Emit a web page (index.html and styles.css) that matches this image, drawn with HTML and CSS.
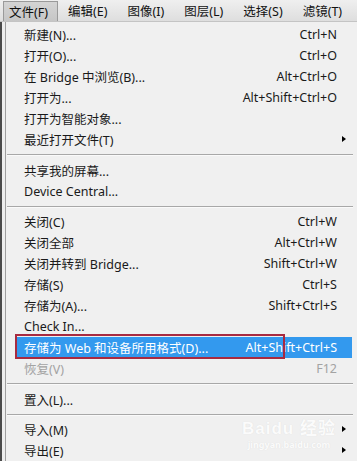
FILE: index.html
```html
<!DOCTYPE html>
<html lang="zh">
<head>
<meta charset="utf-8">
<link rel="stylesheet" href="styles.css">
</head>
<body>
<div class="menubar">
  <div class="top active">文件(F)</div>
  <div class="top">编辑(E)</div>
  <div class="top">图像(I)</div>
  <div class="top">图层(L)</div>
  <div class="top">选择(S)</div>
  <div class="top">滤镜(T)</div>
</div>
<div class="body">
  <div class="strip"></div>
  <div class="menu">
    <div class="item"><span>新建(N)...</span><span class="key">Ctrl+N</span></div>
    <div class="item"><span>打开(O)...</span><span class="key">Ctrl+O</span></div>
    <div class="item"><span>在 Bridge 中浏览(B)...</span><span class="key">Alt+Ctrl+O</span></div>
    <div class="item"><span>打开为...</span><span class="key">Alt+Shift+Ctrl+O</span></div>
    <div class="item"><span>打开为智能对象...</span></div>
    <div class="item"><span>最近打开文件(T)</span><span class="arrow"></span></div>
    <div class="sep"></div>
    <div class="item"><span>共享我的屏幕...</span></div>
    <div class="item"><span>Device Central...</span></div>
    <div class="sep"></div>
    <div class="item"><span>关闭(C)</span><span class="key">Ctrl+W</span></div>
    <div class="item"><span>关闭全部</span><span class="key">Alt+Ctrl+W</span></div>
    <div class="item"><span>关闭并转到 Bridge...</span><span class="key">Shift+Ctrl+W</span></div>
    <div class="item"><span>存储(S)</span><span class="key">Ctrl+S</span></div>
    <div class="item"><span>存储为(A)...</span><span class="key">Shift+Ctrl+S</span></div>
    <div class="item"><span>Check In...</span></div>
    <div class="item selected"><span>存储为 Web 和设备所用格式(D)...</span><span class="key">Alt+Shift+Ctrl+S</span><div class="mark"></div></div>
    <div class="item disabled"><span>恢复(V)</span><span class="key">F12</span></div>
    <div class="sep"></div>
    <div class="item"><span>置入(L)...</span></div>
    <div class="sep"></div>
    <div class="item"><span>导入(M)</span><span class="arrow"></span></div>
    <div class="item"><span>导出(E)</span><span class="arrow"></span></div>
    <div class="watermark"><span class="wm1">Bai<span class="paw">du</span> 经验</span><span class="wm2">jingyan.baidu.com</span></div>
  </div>
</div>
</body>
</html>
```
FILE: styles.css
```css
html, body {
  margin: 0;
  padding: 0;
}
body {
  width: 357px;
  height: 461px;
  overflow: hidden;
  background: #f0f0f0;
  font-family: "Noto Sans", "Noto Sans CJK SC", sans-serif;
  font-size: 12.5px;
  color: #1a1a1a;
}
.menubar {
  height: 22px;
  display: flex;
  align-items: stretch;
  background: linear-gradient(#efefef, #dedede);
  border-bottom: 1px solid #c4c4c4;
  box-sizing: border-box;
  padding-left: 3px;
  overflow: hidden;
}
.top {
  display: flex;
  align-items: center;
  padding: 0 10px 0 8px;
  margin-right: 2px;
  font-size: 12.5px;
  color: #111;
  white-space: nowrap;
  flex-shrink: 0;
}
.top.active {
  background: linear-gradient(#d4d4d4, #c6c6c6);
  border: 1px solid #9a9a9a;
  border-bottom: none;
  margin-top: 1px;
  padding: 0 9px 0 5px;
}
.body {
  display: flex;
  height: 439px;
}
.strip {
  width: 6px;
  background: #ededed;
  border-left: 2px solid #4a4a4a;
  box-sizing: border-box;
  border-right: 1px solid #9e9e9e;
}
.menu {
  flex: 1;
  position: relative;
  padding-top: 2px;
}
.item {
  height: 21px;
  display: flex;
  align-items: center;
  justify-content: space-between;
  padding: 0 20px 0 18px;
  position: relative;
  white-space: nowrap;
}
.key {
  text-align: right;
}
.arrow {
  position: absolute;
  right: 11px;
  top: 7px;
  width: 0;
  height: 0;
  border-top: 3.5px solid transparent;
  border-bottom: 3.5px solid transparent;
  border-left: 4px solid #000;
}
.sep {
  height: 1px;
  background: #a8a8a8;
  border-bottom: 1px solid #fafafa;
  margin: 4px 4px 3.5px 1px;
}
.selected {
  background: #3399ee;
  color: #fff;
  margin: 0 5px 0 10px;
  padding-left: 8px;
  padding-right: 15px;
}
.mark {
  position: absolute;
  left: -1px;
  top: -3px;
  width: 266px;
  height: 21px;
  border: 2px solid #a82a40;
}
.disabled {
  color: #a3a3a3;
}
.watermark {
  position: absolute;
  left: 236px;
  top: 392px;
  display: flex;
  flex-direction: column;
  align-items: center;
  color: #fbfbfb;
  pointer-events: none;
  text-shadow: 0 0 1px #dadada;
}
.wm1 {
  font-family: "Liberation Sans", "Noto Sans CJK SC", sans-serif;
  font-size: 17px;
  font-weight: bold;
  letter-spacing: 1px;
}
.wm2 {
  font-size: 9px;
  font-weight: bold;
  margin-top: -1px;
}
```
